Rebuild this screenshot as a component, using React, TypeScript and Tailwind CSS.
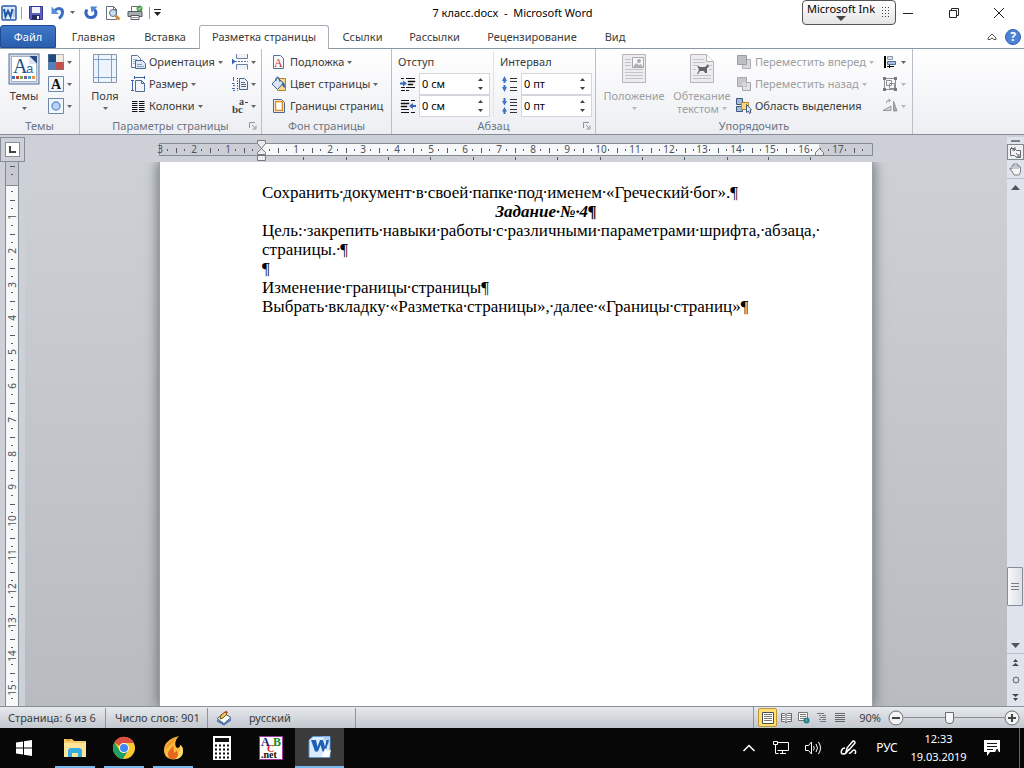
import type { ReactNode } from 'react';

interface IconProps {
  children: ReactNode;
  w?: number;
  h?: number;
}

function Icon({ children, w = 16, h = 16 }: IconProps) {
  return (
    <svg width={w} height={h} viewBox={`0 0 ${w} ${h}`} fill="none" className="shrink-0" aria-hidden="true">
      {children}
    </svg>
  );
}

function Caret({ muted = false }: { muted?: boolean }) {
  return (
    <Icon w={5} h={3}>
      <path d="M0 0h5L2.500 3z" fill={muted ? '#b4b6b9' : '#666'} />
    </Icon>
  );
}

/* ---------- quick access icons ---------- */

const wordIcon = (
  <Icon>
    <rect x="1" y="1" width="14" height="14" rx="1" fill="#dcebfa" stroke="#2a5ea8" strokeWidth="1.5" />
    <path d="M3 4l1.500 7.500L7 6l2.500 5.500L11.500 4" stroke="#1f56a5" strokeWidth="2" />
    <path d="M13 4v8" stroke="#8fb2dc" />
  </Icon>
);
const saveIcon = (
  <Icon>
    <path d="M1.500 1.500h13v13h-12l-1-1z" fill="#5a5fc0" stroke="#343a94" />
    <rect x="4" y="2" width="8" height="6" fill="#f2f4fb" />
    <rect x="4" y="10" width="8" height="4.500" fill="#262b60" />
    <rect x="9" y="11" width="2" height="3" fill="#fff" />
  </Icon>
);
const undoIcon = (
  <Icon>
    <path d="M5 5.500c3-3.500 8-2 7.500 2-.2 2.500-1.500 4.500-3.500 6" stroke="#3c6fc4" strokeWidth="3" />
    <path d="M1.500 1.500v7.500h7.500z" fill="#5b8edb" />
  </Icon>
);
const redoIcon = (
  <Icon>
    <path d="M4 4.500c-2.500 3.500-.5 8 4 8s6.500-4.500 3.500-8" stroke="#3467bd" strokeWidth="3" />
    <path d="M7.500 1.500h7l-6 6z" fill="#4f86d8" />
  </Icon>
);
const previewIcon = (
  <Icon>
    <path d="M1.500 1.500h7l3 3v10h-10z" fill="#fff" stroke="#66707c" />
    <path d="M8.500 1.500v3h3" stroke="#66707c" />
    <circle cx="8" cy="8" r="3.500" fill="#c6def4" stroke="#5f6f82" />
    <path d="M10.500 10.500l4 4" stroke="#d98b2c" strokeWidth="2.500" />
  </Icon>
);
const printIcon = (
  <Icon>
    <path d="M4.500 6V1.500h7V6" fill="#fff" stroke="#6b7078" />
    <path d="M1 6.500h14v5H1z" fill="#a8adb4" stroke="#555a60" />
    <path d="M4 10.500h8v4H4z" fill="#fff" stroke="#555a60" />
    <path d="M5 12.500h6" stroke="#8b9098" />
    <circle cx="12.500" cy="3.500" r="3" fill="#4ba04c" />
    <path d="M11 3.500l1 1 2-2" stroke="#fff" />
  </Icon>
);

/* ---------- ribbon icons ---------- */

const themesIcon = (
  <Icon w={32} h={32}>
    <rect x="1" y="1" width="30" height="30" fill="#d3dbe7" stroke="#55709b" />
    <path d="M3.500 3.500h25v25h-25z" fill="#fff" stroke="#9fb0c9" />
    <path d="M21 3h8v8z" fill="#2b4a82" />
    <path d="M21 3v8h8z" fill="#dbe5f3" />
    <text x="5" y="20" fontSize="20" fill="#1f4f85" className="font-['Liberation_Serif',serif]">A</text>
    <text x="18" y="20" fontSize="13" fill="#2e6ca8" className="font-['Liberation_Sans',sans-serif]">a</text>
    <path d="M4 24.500h3" stroke="#3d6ebd" strokeWidth="3" />
    <path d="M8 24.500h3" stroke="#c14b40" strokeWidth="3" />
    <path d="M12 24.500h3" stroke="#7eab3f" strokeWidth="3" />
    <path d="M16 24.500h3" stroke="#7c5aa5" strokeWidth="3" />
    <path d="M20 24.500h3" stroke="#3fa3c1" strokeWidth="3" />
    <path d="M24 24.500h3" stroke="#ef9140" strokeWidth="3" />
  </Icon>
);
const themeColorsIcon = (
  <Icon>
    <path d="M0 0h8v8H0z" fill="#1f497d" />
    <path d="M8 0h8v8H8z" fill="#eeece1" />
    <path d="M0 8h8v8H0z" fill="#4f81bd" />
    <path d="M8 8h8v8H8z" fill="#c0504d" />
    <path d="M.5.5h15v15H.5z" stroke="#6c7f9c" strokeOpacity=".5" />
  </Icon>
);
const themeFontsIcon = (
  <Icon>
    <path d="M.5.5h15v15H.5z" fill="#f3f7fc" stroke="#6c87ad" />
    <text x="3" y="13" fontSize="14" fontWeight="bold" fill="#111" className="font-['Liberation_Serif',serif]">A</text>
  </Icon>
);
const themeEffectsIcon = (
  <Icon>
    <path d="M.5.5h15v15H.5z" fill="#f3f7fc" stroke="#6c87ad" />
    <circle cx="8" cy="8" r="4" fill="#b9d4f7" stroke="#6c94d6" strokeWidth="1.500" />
  </Icon>
);
const marginsIcon = (
  <Icon w={26} h={32}>
    <path d="M1.500 1.500h23v28h-23z" fill="#eef4fb" stroke="#8a97aa" />
    <path d="M6.500 2v27M19.500 2v27M2 6.500h22M2 24.500h22" stroke="#7ea1c9" />
  </Icon>
);
const orientationIcon = (
  <Icon>
    <path d="M1.500 1.500h6l3 3v9h-9z" fill="#f4f7fc" stroke="#5e7596" />
    <path d="M3 5.500h4M3 7.500h4M3 9.500h4" stroke="#9fb2cf" />
    <path d="M5.500 6.500h7l3 3v5h-10z" fill="#dce8f6" stroke="#4c678f" />
    <path d="M7 10.500h5M7 12.500h7" stroke="#88a3c8" />
  </Icon>
);
const sizeIcon = (
  <Icon>
    <path d="M4 1.500h11M4.500 0v3M14.500 0v3M2.500 4v11M1 4.500h3M1 14.500h3" stroke="#3e62ac" />
    <path d="M5.500 4.500h6l3 3v8h-9z" fill="#f0f5fb" stroke="#4f6d97" />
    <path d="M11.500 4.500v3h3" stroke="#4f6d97" />
  </Icon>
);
const columnsIcon = (
  <Icon>
    <path d="M2 3.500h5.500M2 5.500h5.500M2 7.500h5.500M2 9.500h5.500M2 11.500h5.500M2 13.500h5.500M9 3.500h5.500M9 5.500h5.500M9 7.500h5.500M9 9.500h5.500M9 11.500h5.500M9 13.500h5.500" stroke="#111" />
  </Icon>
);
const breaksIcon = (
  <Icon>
    <path d="M4.500 0v4.500h11V0M4.500 15.500v-5h11v5" fill="#eef3fa" stroke="#6a81a5" />
    <path d="M3 7.500h13" stroke="#4d74b8" strokeDasharray="2 1" />
    <path d="M0 4.500l3.500 3-3.500 3z" fill="#2f62b5" />
  </Icon>
);
const lineNumbersIcon = (
  <Icon>
    <path d="M1.500 1v4M0 7.500h2.500M1 9.500h2M0 12.500h3M1 14.500h2" stroke="#3d68b5" />
    <path d="M5.500 2v13" stroke="#222" strokeDasharray="1 1.500" />
    <path d="M7.500 2.500h5l3 3v8h-8z" fill="#edf2f9" stroke="#4c678f" />
    <path d="M9 6.500h4M9 8.500h5M9 10.500h5" stroke="#54678a" />
  </Icon>
);
const hyphenIcon = (
  <Icon>
    <text x="0" y="15" fontSize="11" fontWeight="bold" fill="#444" className="font-['Liberation_Serif',serif]">bc</text>
    <text x="7" y="7" fontSize="10" fontWeight="bold" fill="#444" className="font-['Liberation_Serif',serif]">a</text>
    <path d="M13 4.500h3" stroke="#444" />
  </Icon>
);
const watermarkIcon = (
  <Icon>
    <path d="M2.500 1.500h7l3 3v10h-10z" fill="#f6f9fd" stroke="#54709b" />
    <text x="3" y="13" fontSize="12" fill="#c9302c" className="font-['Liberation_Serif',serif]">A</text>
  </Icon>
);
const pageColorIcon = (
  <Icon>
    <path d="M7.500 2.500h7v12h-8" fill="#f7dc8c" stroke="#a88430" />
    <path d="M1 8l5.500-6 6 5-6 6.500z" fill="#d8e6f6" stroke="#405f8e" />
    <path d="M5 5c-1-4 2-5 3-3l1 4" stroke="#405f8e" />
    <path d="M12 6c2 2 2.500 4 1.500 6-1-1-2-2-3-4z" fill="#3a63a9" />
  </Icon>
);
const bordersIcon = (
  <Icon>
    <path d="M2.500 1.500h8l3 3v10h-11z" fill="#fff" stroke="#4a678f" />
    <path d="M4.500 3.500h7v9h-7z" stroke="#e08a25" strokeWidth="1.500" />
  </Icon>
);
const indentLeftIcon = (
  <Icon>
    <path d="M1 2.500h3M6 2.500h9M8 5.500h7M8 8.500h5M1 11.500h4M6 11.500h9M1 14.500h4M6 14.500h3" stroke="#111" />
    <path d="M8 5h7v1H8zM8 8h5v1H8z" fill="#111" stroke="#111" strokeWidth=".5" />
    <path d="M0 7.500h3" stroke="#3568bc" strokeWidth="2" />
    <path d="M3 4.500l4 3-4 3z" fill="#3568bc" />
  </Icon>
);
const indentRightIcon = (
  <Icon>
    <path d="M1 2.500h8M11 2.500h4M1 5.500h8M1 8.500h6M1 11.500h8M1 14.500h8M11 14.500h4" stroke="#111" />
    <path d="M1 5h8v1H1zM1 8h6v1H1z" fill="#111" stroke="#111" strokeWidth=".5" />
    <path d="M13 8h3" stroke="#3568bc" strokeWidth="2" />
    <path d="M13 5l-4 3 4 3z" fill="#3568bc" />
  </Icon>
);
const spaceBeforeIcon = (
  <Icon>
    <path d="M2.500 4v3M2.500 9v3" stroke="#3f73c6" strokeWidth="2" />
    <path d="M0 5l2.500-5L5 5zM0 11l2.500 5L5 11z" fill="#3f73c6" />
    <path d="M8 2.500h7M8 5.500h7M8 11.500h7M8 14.500h7" stroke="#333" />
  </Icon>
);
const spaceAfterIcon = (
  <Icon>
    <path d="M2.500 0v3M2.500 13v3" stroke="#3f73c6" strokeWidth="2" />
    <path d="M0 3l2.500 4.500L5 3zM0 13.500L2.500 9 5 13.500z" fill="#3f73c6" />
    <path d="M8 1.500h7M8 4.500h7M8 7.500h7M8 11.500h7M8 14.500h7" stroke="#333" />
  </Icon>
);
const positionIcon = (
  <Icon w={26} h={32}>
    <path d="M1.500 1.500h23v28h-23z" fill="#ededf0" stroke="#b9b2b6" />
    <path d="M11.500 4.500h11v10h-11z" fill="#f8f8f8" stroke="#a8a8ac" />
    <circle cx="18" cy="8" r="2" fill="#a9abb0" />
    <path d="M12 14l3-4 3 2 2-1 2 3z" fill="#b0b2b7" />
    <path d="M4 6.500h6M4 9.500h6M4 12.500h6M4 16.500h18M4 19.500h18M4 22.500h18M4 25.500h18" stroke="#c3c4c8" />
  </Icon>
);
const wrapIcon = (
  <Icon w={26} h={32}>
    <path d="M1.500 1.500h16l7 7v21h-23z" fill="#ededf0" stroke="#b9b2b6" />
    <path d="M17.500 1.500v7h7" fill="#fff" stroke="#b0b0b4" />
    <path d="M4 6.500h11M4 9.500h12M4 12.500h4M20 12.500h3M4 16.500h3M20 16.500h3M4 22.500h18M4 25.500h18" stroke="#c3c4c8" />
    <path d="M8 12l3 2h5l3-3 1 3-2 1v5h-2l-1-2h-4l-2 3H8l2-4z" fill="#626469" />
  </Icon>
);
const forwardIcon = (
  <Icon>
    <path d="M6.500 5.500h8v9h-8z" fill="#d9d9dc" stroke="#b0b1b5" />
    <path d="M1.500 1.500h9v9h-9z" fill="#bdbec2" stroke="#9b9ca1" />
  </Icon>
);
const backwardIcon = (
  <Icon>
    <path d="M6.500 6.500h8v8h-8z" fill="#e4e4e6" stroke="#a4a5a9" />
    <path d="M1.500 1.500h9v9h-9z" fill="#c6c7ca" stroke="#a9aaae" />
    <path d="M6.500 6.500h4v4h-4z" fill="#dcdcdf" />
  </Icon>
);
const selectionIcon = (
  <Icon>
    <path d="M.5.5h6v6h-6zM.5 8.500h6v5h-6z" fill="#a8bbd8" stroke="#3e577f" />
    <path d="M5.500 4.500h7v7h-7z" fill="#fbd673" stroke="#b08a30" />
    <path d="M10.500 6.500v8l2-1.500 1 2.500 1.500-1-1-2 1.500-.5z" fill="#e8f0fa" stroke="#3e577f" />
  </Icon>
);
const alignIcon = (
  <Icon>
    <path d="M3 2v12" stroke="#000" strokeWidth="2" />
    <path d="M5.500 2.500h5v3h-5z" fill="#d9e0ea" stroke="#8d99ab" />
    <path d="M5.500 7.500h8v3h-8z" fill="#aac0de" stroke="#4b6b99" />
    <path d="M5 12.500h7M7.500 11v3" stroke="#000" />
  </Icon>
);
const groupIcon = (
  <Icon>
    <path d="M2.500 2.500h11v11h-11zM4.500 4.500h5v5h-5zM7.500 7.500h5v5h-5z" stroke="#8f9094" />
    <path d="M1 1h3v3H1zM12 1h3v3h-3zM1 12h3v3H1zM12 12h3v3h-3z" fill="#77787c" />
  </Icon>
);
const rotateIcon = (
  <Icon>
    <path d="M1 12.500h8V8z" fill="#d2d3d6" stroke="#98999d" />
    <path d="M11.500 3v10H15z" fill="#a4a5a9" stroke="#98999d" />
    <path d="M4.500 5c0-2 1-3 3-2.500M6.500 1l2 1.500L6.500 4" stroke="#8f9094" />
  </Icon>
);

/* ---------- ribbon parts ---------- */

interface GroupProps {
  title: string;
  className: string;
  launcher?: boolean;
  children: ReactNode;
}

function Group({ title, className, launcher = false, children }: GroupProps) {
  return (
    <section aria-label={title} className={`flex shrink-0 flex-col border-r border-[#b9bfc8] ${className}`}>
      <div className="flex flex-1 pt-0.5">{children}</div>
      <div className="relative flex h-[17px] items-center justify-center text-[#6b7483]">
        {title}
        {launcher && (
          <button aria-label={`${title}: параметры`} className="absolute right-1 top-1">
            <Icon w={9} h={9}>
              <path d="M1.500 7V1.500H7M4 4l3 3M8 4.500V8H4.500" stroke="#8c939e" />
            </Icon>
          </button>
        )}
      </div>
    </section>
  );
}

interface ItemProps {
  icon: ReactNode;
  label?: string;
  name?: string;
  menu?: boolean;
  disabled?: boolean;
}

function Item({ icon, label, name, menu = false, disabled = false }: ItemProps) {
  return (
    <button
      aria-label={label ?? name}
      disabled={disabled}
      className="flex h-[22px] items-center gap-[3px] whitespace-nowrap text-[#3b3b3b] disabled:text-[#9d9fa2]"
    >
      {icon}
      {label}
      {menu && <Caret muted={disabled} />}
    </button>
  );
}

function LargeItem({ icon, lines, disabled = false }: { icon: ReactNode; lines: string[]; disabled?: boolean }) {
  const inline = lines.length > 1;
  return (
    <button disabled={disabled} className="flex flex-1 flex-col items-center pt-0.5 text-[#3b3b3b] disabled:text-[#9d9fa2]">
      {icon}
      <span className="mt-1 leading-[13px]">{lines[0]}</span>
      <span className="flex h-[13px] items-center gap-[3px] leading-[13px]">
        {inline && lines[1]}
        <Caret muted={disabled} />
      </span>
    </button>
  );
}

function SpinField({ icon, label, value }: { icon: ReactNode; label: string; value: string }) {
  return (
    <label className="flex h-[22px] items-center gap-[3px] pl-0.5">
      {icon}
      <span className="flex h-[22px] w-[71px] items-center border border-[#d3d6dc] bg-white pr-1.5">
        <input aria-label={label} defaultValue={value} className="w-0 flex-1 bg-transparent pl-0.5 text-black outline-none" />
        <Icon w={5} h={14}>
          <path d="M0 4h5L2.500 1zM0 10h5l-2.500 3z" fill="#444" />
        </Icon>
      </span>
    </label>
  );
}

/* ---------- rulers ---------- */

function HorizontalRuler() {
  const marks = Array.from({ length: 21 }, (_, i) => i);
  return (
    <svg width="714" height="25" viewBox="0 0 714 25" className="shrink-0 overflow-visible text-[10px]" aria-label="Линейка">
      <path d="M.5 6.500h713v12H.5z" fill="#cbcfd5" stroke="#838b95" />
      <path d="M103 7h557v11H103z" fill="#f7f8f9" />
      {marks.map((i) => {
        const x = Math.round(i * 33.9);
        return (
          <g key={i}>
            {i !== 3 && (
              <text x={x + 1} y="16" textAnchor="middle" fill="#4c525b">
                {Math.abs(i - 3)}
              </text>
            )}
            <path d={`M${x + 8.5} 12v2M${x + 17.5} 11v5M${x + 25.5} 12v2`} stroke="#555b64" />
          </g>
        );
      })}
      {[144, 187, 229, 271, 314, 356, 398, 441, 483, 525, 568, 609, 651].map((x) => (
        <path key={x} d={`M${x}.5 20v3`} stroke="#555b64" />
      ))}
      <path d="M98.500 3.500h8v3l-4 5 4 4v2h-8v-2l4-4-4-5z" fill="#e9ebed" stroke="#777c84" />
      <path d="M98.500 18.500h8v5h-8z" fill="#e9ebed" stroke="#777c84" />
      <path d="M656.500 18.500v-3l4-4 4 4v3z" fill="#e9ebed" stroke="#777c84" />
    </svg>
  );
}

function VerticalRuler() {
  const marks = Array.from({ length: 15 }, (_, i) => i);
  return (
    <svg width="14" height="1400" className="ml-[5px] block text-[10px]" aria-label="Вертикальная линейка">
      <path d="M.5 0v1400M13.500 0v1400" stroke="#838b95" />
      <path d="M1 0h12v23H1z" fill="#c6cad0" />
      <path d="M1 24h12v1376H1z" fill="#f7f8f9" />
      <path d="M0 23.500h14" stroke="#838b95" />
      <path d="M5 4.500h5M6 12.500h2" stroke="#555b64" />
      {marks.map((i) => {
        const y = Math.round(i * 33.8) + 21;
        return (
          <g key={i}>
            <path d={`M6 ${y + 8.5}h2M5 ${y + 17.5}h5M6 ${y + 25.5}h2`} stroke="#555b64" />
            <text transform={`translate(11 ${y + 34}) rotate(-90)`} textAnchor="middle" fill="#4c525b">
              {i + 1}
            </text>
          </g>
        );
      })}
      <path d="M6 536.500h2" stroke="#555b64" />
    </svg>
  );
}

/* ---------- document ---------- */

interface Paragraph {
  text: string;
  heading?: boolean;
}

const paragraphs: Paragraph[] = [
  { text: 'Сохранить документ в своей папке под именем «Греческий бог».' },
  { text: 'Задание № 4', heading: true },
  { text: 'Цель: закрепить навыки работы с различными параметрами шрифта, абзаца, страницы. ' },
  { text: '' },
  { text: 'Изменение границы страницы' },
  { text: 'Выбрать вкладку «Разметка страницы», далее «Границы страниц»' },
];

// A formatting dot takes the width of the space it stands for.
function MarkedText({ text }: { text: string }) {
  return text.split(' ').map((word, i) => (
    <span key={i}>
      {i > 0 && <span className="inline-flex w-1 justify-center">·</span>}
      <wbr />
      {word}
    </span>
  ));
}

function Page() {
  return (
    <article className="w-[714px] flex-1 border-x border-[#9a9ea5] bg-white pl-[102px] pr-[50px] pt-[21px] font-['Liberation_Serif',serif] text-[17px] leading-[19px] text-black shadow-[0_0_12px_1px_#6b6f76]">
      {paragraphs.map((p, i) => (
        <p key={i} className={p.heading ? 'pl-2 text-center font-bold italic' : ''}>
          <MarkedText text={p.text} />¶
        </p>
      ))}
    </article>
  );
}

function ScrollBar() {
  return (
    <div className="flex w-[17px] shrink-0 flex-col items-center bg-[#dfe4ec] pt-[3px]">
      <span className="h-0.5 w-[9px] bg-[#7b818a]" />
      <button aria-label="Линейка" className="mt-0.5 flex h-4 w-[17px] items-center justify-center border border-[#7f8792] bg-[#eceef1]">
        <Icon w={13} h={13}>
          <path d="M1.500 2.500h4l2 2h4v7h-4l-2-2h-4z" fill="#f6f2f5" stroke="#666b73" />
          <path d="M2 1l4 4M7 7l4 5M3 4h3V1M7 11h3V8" stroke="#666b73" />
        </Icon>
      </button>
      <button aria-label="Рука" className="flex h-[18px] items-center">
        <Icon w={13} h={13}>
          <path d="M3 8L1 6.500 1 5l2 1V2.500h1.500V1h2v0h2v1.500H10V4h1.500v5L10 12H5z" fill="#f4f4f5" stroke="#7d828a" />
          <path d="M5 2v4M7 1.500V6M9 2.500V6" stroke="#9a9fa6" />
        </Icon>
      </button>
      <button aria-label="Вверх" className="flex h-[17px] w-full items-center justify-center border-t border-[#b9c0cc]">
        <Icon w={9} h={5}>
          <path d="M0 5h9L4.500 0z" fill="#555" />
        </Icon>
      </button>
      <div className="flex w-full flex-1 flex-col justify-end pb-[31px]">
        <div className="flex h-[39px] w-4 flex-col items-center justify-center gap-px rounded-[1px] border border-[#848c99] bg-linear-to-r from-[#f6f8fa] to-[#dcdfe5]">
          <span className="h-px w-2 bg-[#777d87]" />
          <span className="mt-px h-px w-2 bg-[#777d87]" />
          <span className="mt-px h-px w-2 bg-[#777d87]" />
        </div>
      </div>
      <button aria-label="Вниз" className="flex h-[17px] w-full items-center justify-center border-b border-[#b9c0cc]">
        <Icon w={9} h={5}>
          <path d="M0 0h9L4.500 5z" fill="#555" />
        </Icon>
      </button>
      <button aria-label="Предыдущая страница" className="flex h-[17px] items-center">
        <Icon w={7} h={8}>
          <path d="M1 3h5L3.500 0zM0 7h7L3.500 4z" fill="#444" />
        </Icon>
      </button>
      <button aria-label="Выбор объекта перехода" className="flex h-[17px] items-center">
        <Icon w={8} h={8}>
          <circle cx="4" cy="4" r="3" fill="#d4d6d9" stroke="#666" />
        </Icon>
      </button>
      <button aria-label="Следующая страница" className="mb-px flex h-[17px] items-center">
        <Icon w={7} h={8}>
          <path d="M0 1h7L3.500 4zM1 5h5L3.500 8z" fill="#444" />
        </Icon>
      </button>
    </div>
  );
}

/* ---------- status bar ---------- */

const views: { name: string; active?: boolean; icon: ReactNode }[] = [
  {
    name: 'Разметка страницы',
    active: true,
    icon: (
      <Icon>
        <path d="M2.500 2.500h11v11h-11z" fill="#fff" stroke="#4d4d4d" />
        <path d="M4 4.500h8M4 6.500h8M4 8.500h8M4 10.500h8" stroke="#777" />
      </Icon>
    ),
  },
  {
    name: 'Режим чтения',
    icon: (
      <Icon>
        <path d="M3.500 3.500h3l1.500 1 1.500-1h4v8h-4L8 13l-1.500-1.500h-3zM8 4.500V13" fill="#fff" stroke="#666" />
        <path d="M4 5.500h3M4 7.500h3M4 9.500h3M9 5.500h4M9 7.500h4M9 9.500h4" stroke="#888" />
      </Icon>
    ),
  },
  {
    name: 'Веб-документ',
    icon: (
      <Icon>
        <path d="M2.500 2.500h9v8h-9z" fill="#fff" stroke="#777" />
        <path d="M4 4.500h6M4 6.500h6M4 8.500h6" stroke="#777" />
        <circle cx="10.500" cy="10.500" r="3" fill="#267b9c" />
        <path d="M9 9.500l2-1 1 2-2 2z" fill="#58a867" />
      </Icon>
    ),
  },
  {
    name: 'Структура',
    icon: (
      <Icon>
        <path d="M3 3.500h7M5 5.500h2M8 5.500h4M6 7.500h6M5 9.500h2M8 9.500h4M6 11.500h6" stroke="#777" />
      </Icon>
    ),
  },
  {
    name: 'Черновик',
    icon: (
      <Icon>
        <path d="M3 3.500h10M3 5.500h10M3 7.500h10M3 9.500h10M3 11.500h10" stroke="#666" />
      </Icon>
    ),
  },
];

function StatusBar() {
  return (
    <footer className="flex h-[22px] shrink-0 items-center border-t border-[#868e99] bg-linear-to-b from-[#e6e9ed] to-[#c3c8cf] text-[#3b3b3b]">
      <span className="w-[106px] border-r border-[#8d949e] pl-2 leading-[20px]">Страница: 6 из 6</span>
      <span className="w-[102px] border-r border-[#8d949e] pl-[9px] leading-[20px]">Число слов: 901</span>
      <span className="flex w-[148px] items-center gap-[17px] border-r border-[#8d949e] pl-2 leading-[20px]">
        <Icon>
          <path d="M1 8.500l7-5 7 4-7 6z" fill="#fff" stroke="#4a5a7c" />
          <path d="M1 9.500l7 4.500 7-5.500v2l-7 5-7-4z" fill="#3f6cb5" />
          <path d="M5 5l4-3 2 2-4 4-3 1z" fill="#f4c94f" stroke="#6b5520" />
          <path d="M8.500 2L10 .500l2 2-1.500 1.500z" fill="#c9423a" />
        </Icon>
        русский
      </span>
      <div className="ml-auto flex h-full items-center border-l border-[#8d949e] pl-1">
        {views.map((v) => (
          <button
            key={v.name}
            aria-label={v.name}
            className={
              v.active
                ? 'flex h-[19px] w-[19px] items-center justify-center rounded-[2px] border border-[#c2932f] bg-[#fde176]'
                : 'flex h-[19px] w-[18px] items-center justify-center'
            }
          >
            {v.icon}
          </button>
        ))}
        <button className="ml-[9px] w-6 text-center">90%</button>
        <button aria-label="Уменьшить" className="ml-1.5 shrink-0">
          <Icon>
            <circle cx="8" cy="8" r="7" fill="#f2f3f5" stroke="#666c75" />
            <path d="M4 8h8" stroke="#444" strokeWidth="2" />
          </Icon>
        </button>
        <input
          type="range"
          aria-label="Масштаб"
          min="0"
          max="100"
          defaultValue="45"
          className="h-4 w-[100px] appearance-none bg-[linear-gradient(#858c96,#858c96)] bg-[length:100%_1px] bg-center bg-no-repeat [&::-webkit-slider-thumb]:h-3 [&::-webkit-slider-thumb]:w-[9px] [&::-webkit-slider-thumb]:appearance-none [&::-webkit-slider-thumb]:rounded-b-[4px] [&::-webkit-slider-thumb]:border [&::-webkit-slider-thumb]:border-[#666c75] [&::-webkit-slider-thumb]:bg-[#f5f6f7]"
        />
        <button aria-label="Увеличить" className="mr-1 shrink-0">
          <Icon>
            <circle cx="8" cy="8" r="7" fill="#f2f3f5" stroke="#666c75" />
            <path d="M4 8h8M8 4v8" stroke="#444" strokeWidth="2" />
          </Icon>
        </button>
      </div>
    </footer>
  );
}

/* ---------- taskbar ---------- */

const apps: { name: string; open?: boolean; icon: ReactNode }[] = [
  {
    name: 'Проводник',
    open: true,
    icon: (
      <Icon w={24} h={24}>
        <path d="M1 3h8l2 2h12v16H1z" fill="#f4cf6b" />
        <path d="M1 7h22v14H1z" fill="#fde59a" />
        <path d="M3 3h5v2H3z" fill="#e9a93a" />
        <path d="M5 21v-7l2-2h10l2 2v7h-4v-4H9v4z" fill="#35ace4" />
      </Icon>
    ),
  },
  {
    name: 'Chrome',
    open: true,
    icon: (
      <Icon w={24} h={24}>
        <circle cx="12" cy="12" r="11" fill="#fbc92f" />
        <path d="M2.500 6.500A11 11 0 0 1 22 7H12a5 5 0 0 0-4.500 3z" fill="#dd4f41" />
        <path d="M2.500 6.500A11 11 0 0 0 11 23l5.500-9.500L12 17a5 5 0 0 1-4.500-3z" fill="#1f9f5f" />
        <circle cx="12" cy="12" r="5" fill="#fff" />
        <circle cx="12" cy="12" r="4" fill="#4285f4" />
      </Icon>
    ),
  },
  {
    name: 'Огонь',
    open: true,
    icon: (
      <Icon w={24} h={24}>
        <path d="M18 0C9 2 3 7 3 14c0 6 4 9.500 9.500 9.500S22 20 22 15c0-3-1-5-3-6 0 2-1 3-3 3-3-3-2-8 2-12z" fill="#f9b840" />
        <path d="M17 1C10 3 5 8 4 14c2-3 5-4 7-6 2-3 3-5 6-7z" fill="#f39a2d" />
        <path d="M19 9c1 4 0 7-3 9l-1 5c5-1 7-4 7-8 0-3-1-5-3-6z" fill="#fddc68" />
        <path d="M12 9c0 3-5 5-5 9 0 3 2 5 5 5s5-2 5-5c0-1-1-3-2-3 0 1-1 2-2 1-1-2 0-4-1-7z" fill="#e9641c" />
      </Icon>
    ),
  },
  {
    name: 'Калькулятор',
    icon: (
      <Icon w={18} h={24}>
        <path d="M0 0h18v24H0z" fill="#fff" />
        <path d="M2 2h14v4H2z" fill="#111" />
        <path d="M2 9.500h14M2 13.500h14M2 17.500h14M2 21.500h14" stroke="#111" strokeWidth="2" strokeDasharray="2 2" />
      </Icon>
    ),
  },
  {
    name: 'PascalABC.NET',
    icon: (
      <Icon w={24} h={24}>
        <path d="M.5.500h23v23H.5z" fill="#fff" stroke="#a038a0" />
        <g fontWeight="bold" className="font-['Liberation_Serif',serif]">
          <text x="2" y="10" fontSize="12" fill="#1a1a7c">A</text>
          <text x="14" y="10" fontSize="12" fill="#128a28">B</text>
          <text x="8" y="16" fontSize="10" fill="#e02020">C</text>
          <text x="2" y="22" fontSize="10" fill="#111">.net</text>
        </g>
      </Icon>
    ),
  },
];

function Taskbar() {
  return (
    <nav aria-label="Панель задач" className="flex h-10 shrink-0 items-center bg-[#070707] text-white">
      <button aria-label="Пуск" className="mr-0.5 flex w-12 justify-center">
        <Icon>
          <path d="M0 2.500L7 1.500v6H0zM8 1.300L16 0v7.500H8zM0 8.500h7v6l-7-1zM8 8.500h8V16l-8-1.200z" fill="#fff" />
        </Icon>
      </button>
      {apps.map((app) => (
        <button key={app.name} aria-label={app.name} className="flex h-full w-[49px] flex-col items-center">
          <span className="flex flex-1 items-center pt-0.5">{app.icon}</span>
          <span className={app.open ? 'h-0.5 w-10 bg-[#76b9ed]' : 'h-0.5 w-10'} />
        </button>
      ))}
      <button aria-label="Word" className="flex h-full w-[49px] flex-col items-center bg-[#3b3b3b]">
        <span className="flex flex-1 items-center">
          <Icon w={24} h={24}>
            <path d="M5 1.500h17v21H2a1 1 0 0 1-1-1V5z" fill="#dcebfb" stroke="#5d94d2" />
            <path d="M14 1.500h8v10z" fill="#a9cdf2" />
            <path d="M3 5h5l1.500 7L12 5h3l2 7 1.500-7H21l-3.500 11.500h-3L12.500 10l-2.500 6.500H7z" fill="#1d5fb8" />
            <path d="M14 22l3-9 2 3 4-1-2 7z" fill="#fff" />
          </Icon>
        </span>
        <span className="h-0.5 w-full bg-[#76b9ed]" />
      </button>
      <div className="ml-auto flex h-full items-center">
        <button aria-label="Скрытые значки" className="flex w-8 justify-center">
          <Icon w={14} h={8}>
            <path d="M1.500 7L7 1.500 12.500 7" stroke="#fff" strokeWidth="1.500" />
          </Icon>
        </button>
        <button aria-label="Сеть" className="flex w-8 justify-center">
          <Icon>
            <path d="M4.500 2.500h11v8h-11M7 13.500h6M9.500 11v3M.5 1.500h4v3h-4zM2.500 4.500v9h3" stroke="#fff" />
          </Icon>
        </button>
        <button aria-label="Громкость" className="flex w-8 justify-center">
          <Icon w={18}>
            <path d="M1.500 5.500h3l3-3.500v12l-3-3.500h-3z" stroke="#fff" />
            <path d="M9.500 6q1.500 2 0 4.500M12 4q3 4 0 8M14.500 2q4 6 0 12" stroke="#fff" />
          </Icon>
        </button>
        <button aria-label="Windows Ink" className="flex w-10 justify-center">
          <Icon w={18}>
            <path d="M6 12l1-4 6-7q2 0 2 2l-6 7zM5 8c-4 0-5 6-2 6 4 0 4-3 6-5M9 13c2 1 3-3 5-3s2 2 1 4" stroke="#fff" strokeWidth="1.500" />
          </Icon>
        </button>
        <button className="w-9 text-center text-[12px]">РУС</button>
        <button className="w-[67px] text-center text-[11px] leading-[18px]">
          12:33
          <br />
          19.03.2019
        </button>
        <button aria-label="Уведомления" className="flex w-[39px] justify-center">
          <Icon>
            <path d="M0 0h16v12H6l-3 4v-4H0z" fill="#fff" />
            <path d="M3 3.500h10M3 6.500h10M3 9.500h6" stroke="#111" />
            <path d="M9 16c0-3 3-1 4-7 0 3 2 3 2 5" stroke="#111" strokeWidth="1.500" />
          </Icon>
        </button>
        <span className="ml-2 mr-1 h-full w-px bg-[#666]" />
      </div>
    </nav>
  );
}

/* ---------- window ---------- */

function TitleBar() {
  return (
    <header className="relative flex h-[25px] shrink-0 items-center bg-white">
      <div className="flex flex-1 items-center pl-px">
        {wordIcon}
        <span className="ml-1 mr-1.5 h-3 w-px bg-[#9a9a9a]" />
        <button aria-label="Сохранить">{saveIcon}</button>
        <button aria-label="Отменить" className="ml-1.5 flex items-center gap-1">
          {undoIcon}
          <Caret />
        </button>
        <button aria-label="Вернуть" className="ml-2">{redoIcon}</button>
        <button aria-label="Просмотр" className="ml-1.5">{previewIcon}</button>
        <button aria-label="Печать" className="ml-1.5">{printIcon}</button>
        <span className="ml-1.5 h-3 w-px bg-[#9a9a9a]" />
        <button aria-label="Настройка панели" className="ml-1">
          <Icon w={7} h={7}>
            <path d="M0 .5h7" stroke="#222" />
            <path d="M0 3h7L3.500 7z" fill="#222" />
          </Icon>
        </button>
      </div>
      <h1 className="whitespace-pre text-black">7 класс.docx  -  Microsoft Word</h1>
      <div className="flex flex-1 items-center justify-end">
        <button aria-label="Свернуть" className="flex w-[46px] justify-center">
          <Icon w={10} h={10}><path d="M0 5.500h10" stroke="#222" /></Icon>
        </button>
        <button aria-label="Восстановить" className="flex w-[45px] justify-center">
          <Icon w={10} h={10}><path d="M.5 2.500h7v7h-7zM2.500 2V.500h7v7H8" stroke="#222" /></Icon>
        </button>
        <button aria-label="Закрыть" className="mr-0.5 flex w-[46px] justify-center">
          <Icon w={10} h={10}><path d="M0 0l10 10M10 0L0 10" stroke="#222" /></Icon>
        </button>
      </div>
      <div className="absolute right-32 top-0 flex h-[25px] w-[94px] justify-between rounded-[4px] border border-[#555] bg-linear-to-b from-white to-[#e4e4e4] px-1 pt-px text-black">
        <button className="flex flex-col items-center whitespace-nowrap">
          Microsoft Ink
          <Icon w={10} h={5}><path d="M0 0h10L5 5z" fill="#444" /></Icon>
        </button>
        <svg width="9" height="11" className="mt-[5px] shrink-0">
          <path d="M.5 0v11M3.500 0v11M6.500 0v11" stroke="#444" strokeDasharray="1 2" />
        </svg>
      </div>
    </header>
  );
}

function Tabs() {
  const tab = 'h-full text-center text-[#3b3b3b]';
  return (
    <div role="tablist" className="flex h-6 shrink-0 items-stretch border-b border-[#8b97a5] bg-white">
      <button className="w-14 rounded-t-[3px] border border-[#1e4c94] bg-linear-to-b from-[#3f76c6] to-[#2a5fb0] text-white">Файл</button>
      <button role="tab" className={`${tab} w-[75px]`}>Главная</button>
      <button role="tab" className={`${tab} w-[68px]`}>Вставка</button>
      <div className="-mb-px w-[130px] rounded-t-[3px] border border-b-0 border-[#a9aeb6] bg-white">
        <button role="tab" aria-selected="true" className="h-full w-full pb-0.5 text-[#3b3b3b]">Разметка страницы</button>
      </div>
      <button role="tab" className={`${tab} w-[67px]`}>Ссылки</button>
      <button role="tab" className={`${tab} w-[77px]`}>Рассылки</button>
      <button role="tab" className={`${tab} w-[118px]`}>Рецензирование</button>
      <button role="tab" className={`${tab} w-12`}>Вид</button>
      <div className="ml-auto flex items-center gap-2 pr-[3px]">
        <button aria-label="Свернуть ленту">
          <Icon w={10} h={8}>
            <path d="M1 5l4-4 4 4v1.500H7L5 5 3 6.500H1z" stroke="#555" />
          </Icon>
        </button>
        <button aria-label="Справка" className="h-4 w-4 rounded-full border border-[#2f5fb0] bg-[#4d83d6] text-[12px] font-bold leading-[14px] text-white">
          ?
        </button>
      </div>
    </div>
  );
}

function Ribbon() {
  return (
    <div className="flex h-[86px] shrink-0 border-b border-[#858d98] bg-linear-to-b from-white to-[#eceef2]">
      <Group title="Темы" className="w-20">
        <LargeItem icon={themesIcon} lines={['Темы']} />
        <div className="mr-[7px]">
          <Item icon={themeColorsIcon} name="Цвета" menu />
          <Item icon={themeFontsIcon} name="Шрифты" menu />
          <Item icon={themeEffectsIcon} name="Эффекты" menu />
        </div>
      </Group>
      <Group title="Параметры страницы" className="w-[182px]" launcher>
        <LargeItem icon={marginsIcon} lines={['Поля']} />
        <div className="w-[102px]">
          <Item icon={orientationIcon} label="Ориентация" menu />
          <Item icon={sizeIcon} label="Размер" menu />
          <Item icon={columnsIcon} label="Колонки" menu />
        </div>
        <div className="mr-[5px]">
          <Item icon={breaksIcon} name="Разрывы" menu />
          <Item icon={lineNumbersIcon} name="Номера строк" menu />
          <Item icon={hyphenIcon} name="Расстановка переносов" menu />
        </div>
      </Group>
      <Group title="Фон страницы" className="w-[130px]">
        <div className="pl-[9px]">
          <Item icon={watermarkIcon} label="Подложка" menu />
          <Item icon={pageColorIcon} label="Цвет страницы" menu />
          <Item icon={bordersIcon} label="Границы страниц" />
        </div>
      </Group>
      <Group title="Абзац" className="w-[204px]" launcher>
        <fieldset className="ml-1.5 w-24 shrink-0 border-r border-[#e0e3e8] text-[#3b3b3b]">
          <div className="leading-[22px]">Отступ</div>
          <SpinField icon={indentLeftIcon} label="Отступ слева" value="0 см" />
          <SpinField icon={indentRightIcon} label="Отступ справа" value="0 см" />
        </fieldset>
        <fieldset className="ml-1.5 shrink-0 text-[#3b3b3b]">
          <div className="leading-[22px]">Интервал</div>
          <SpinField icon={spaceBeforeIcon} label="Интервал до" value="0 пт" />
          <SpinField icon={spaceAfterIcon} label="Интервал после" value="0 пт" />
        </fieldset>
      </Group>
      <Group title="Упорядочить" className="w-[317px]">
        <div className="flex w-[140px] pl-1">
          <LargeItem icon={positionIcon} lines={['Положение']} disabled />
          <LargeItem icon={wrapIcon} lines={['Обтекание', 'текстом']} disabled />
        </div>
        <div className="w-[146px]">
          <Item icon={forwardIcon} label="Переместить вперед" menu disabled />
          <Item icon={backwardIcon} label="Переместить назад" menu disabled />
          <Item icon={selectionIcon} label="Область выделения" />
        </div>
        <div>
          <Item icon={alignIcon} name="Выровнять" menu />
          <Item icon={groupIcon} name="Группировать" menu disabled />
          <Item icon={rotateIcon} name="Повернуть" menu disabled />
        </div>
      </Group>
    </div>
  );
}

export default function App() {
  return (
    <div className="flex h-screen flex-col overflow-hidden bg-white font-['Noto_Sans',sans-serif] text-[11px] leading-[14px]">
      <TitleBar />
      <Tabs />
      <Ribbon />
      <main className="flex min-h-0 flex-1 bg-[#cdd0d6] pt-0.5">
        <div className="flex w-[25px] shrink-0 flex-col">
          <button aria-label="Тип табуляции" className="flex h-[25px] w-[25px] shrink-0 items-center justify-center border border-[#868e99] bg-[#cdd0d6]">
            <span className="flex h-[15px] w-[15px] items-center justify-center border border-[#868e99] bg-white">
              <Icon w={7} h={7}><path d="M1 0v6h6" stroke="#444" strokeWidth="2" /></Icon>
            </span>
          </button>
          <div className="min-h-0 flex-1 overflow-hidden">
            <VerticalRuler />
          </div>
        </div>
        <div className="flex min-w-0 flex-1 flex-col">
          <div className="flex justify-center">
            <HorizontalRuler />
          </div>
          <div className="flex min-h-0 flex-1 flex-col items-center overflow-hidden bg-linear-to-b from-[#cdd1d6] to-[#b8bbc0]">
            <Page />
          </div>
        </div>
        <ScrollBar />
      </main>
      <StatusBar />
      <Taskbar />
    </div>
  );
}
